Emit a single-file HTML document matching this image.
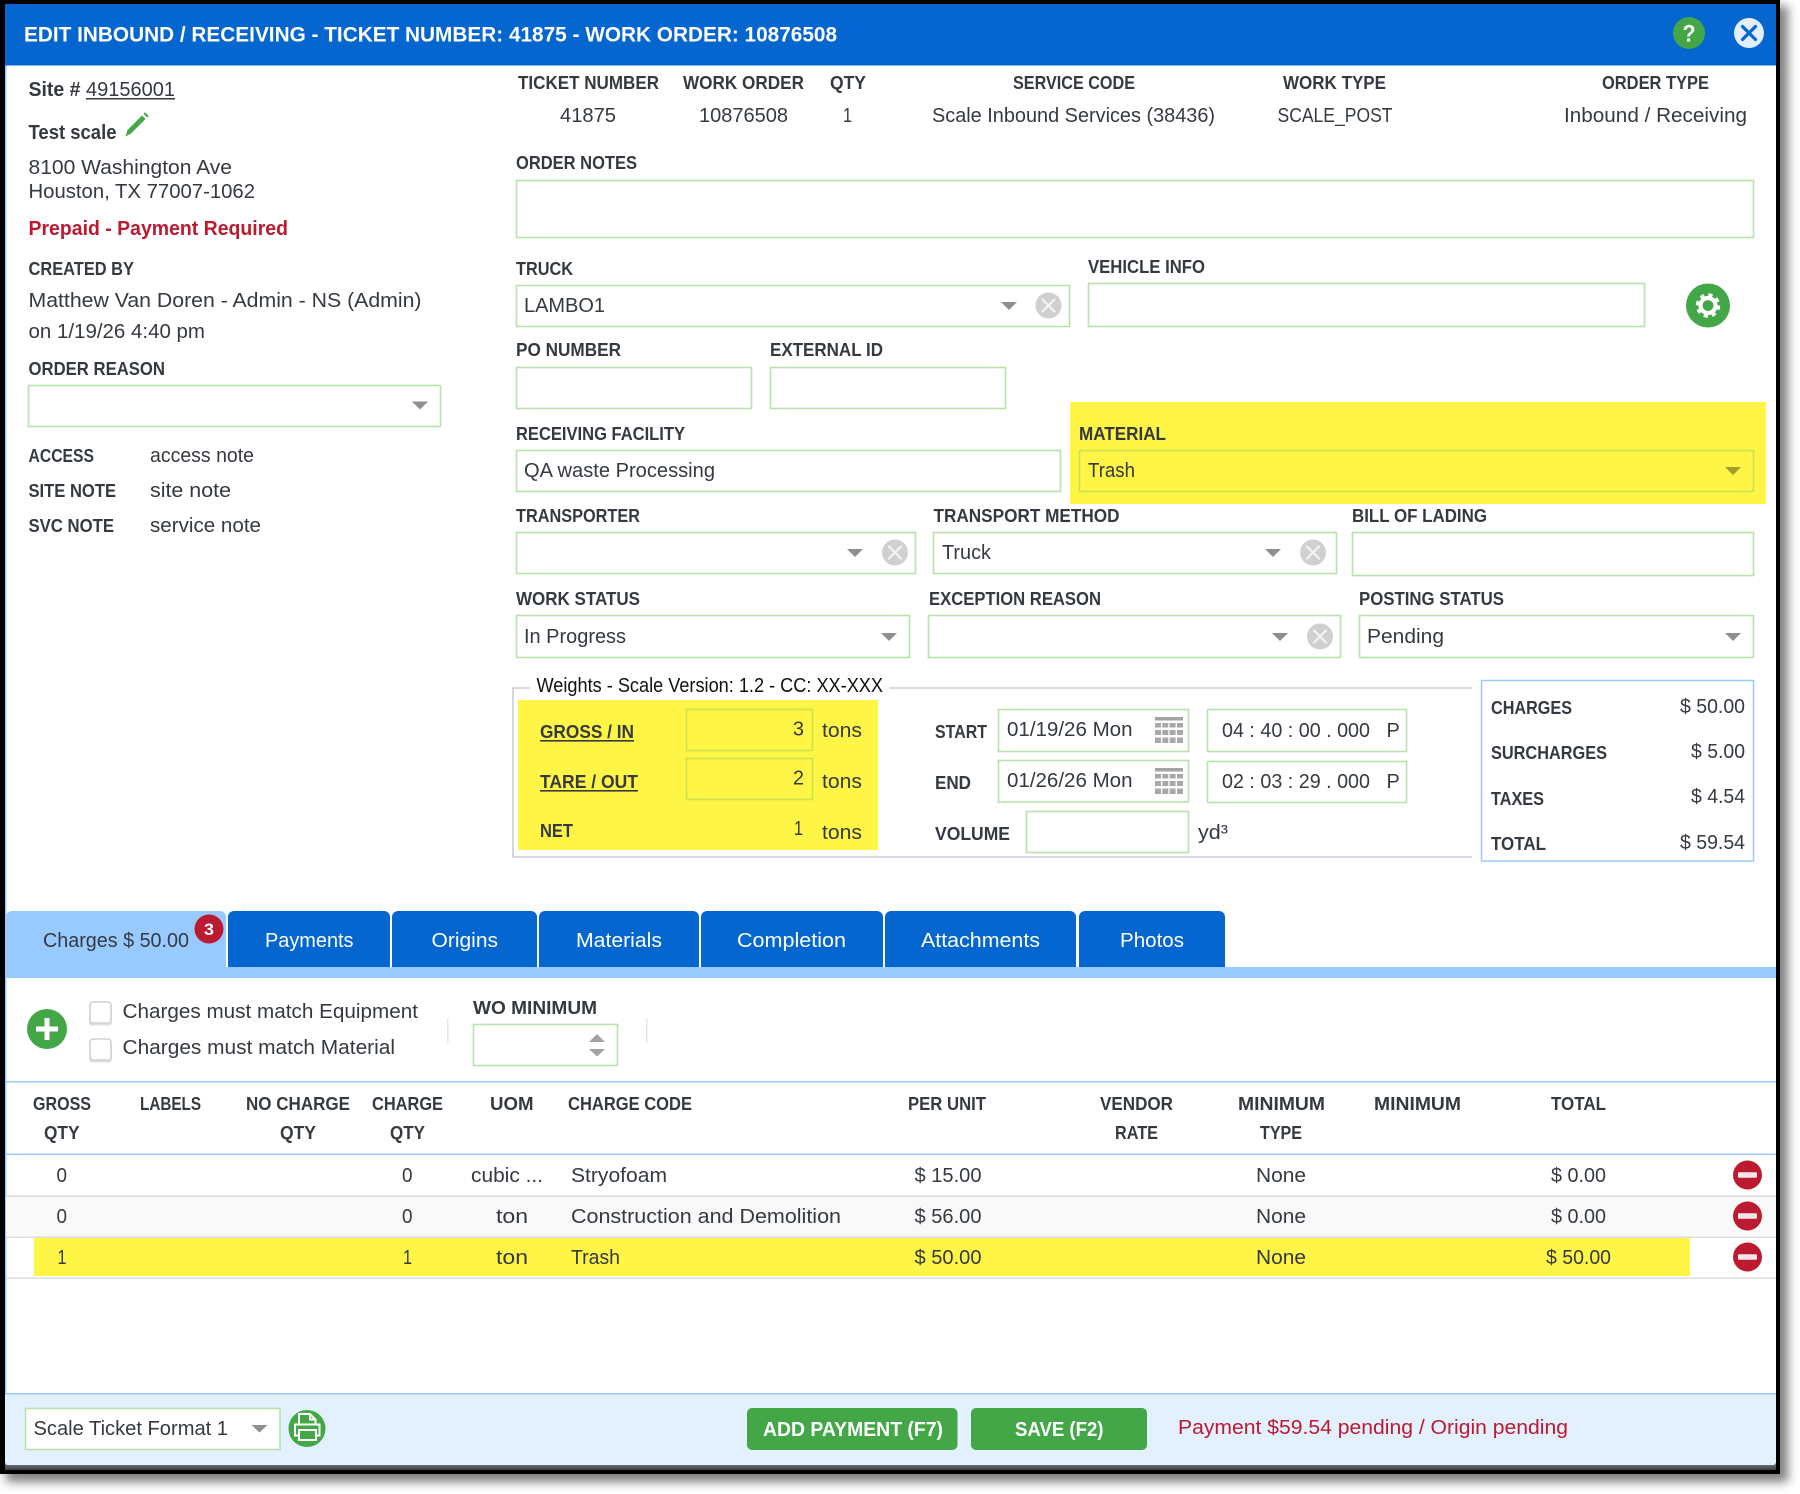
<!DOCTYPE html>
<html lang="en">
<head>
<meta charset="utf-8">
<title>Edit Inbound / Receiving</title>
<style>
html,body{margin:0;padding:0;background:#fff;width:1800px;height:1494px;overflow:hidden}
svg{display:block}
text{font-family:"Liberation Sans",Arial,sans-serif;fill:#343a40;font-size:20px}
.b{font-weight:700;font-size:18px}
.w{fill:#fff}
.red{fill:#bb1a30}
.box{fill:#fff;stroke:#b8e2a9;stroke-width:1.6}
.ybox{fill:none;stroke:#c9e54a;stroke-width:1.6}
</style>
</head>
<body>
<svg width="1800" height="1494" viewBox="0 0 1800 1494" xmlns="http://www.w3.org/2000/svg">
<defs>
<filter id="sh" x="-5%" y="-5%" width="110%" height="110%"><feGaussianBlur stdDeviation="5"/></filter>
<linearGradient id="edge" x1="0" y1="0" x2="0" y2="1"><stop offset="0" stop-color="#9a9ea4"/><stop offset="1" stop-color="#3a3c40"/></linearGradient>
<g id="cal">
<rect x="0" y="0" width="28" height="3.5" fill="#a3a3a3"/>
<g fill="#a8a8a8">
<rect x="0" y="6" width="6" height="4.5"/><rect x="7.3" y="6" width="6" height="4.5"/><rect x="14.6" y="6" width="6" height="4.5"/><rect x="22" y="6" width="6" height="4.5"/>
<rect x="0" y="13" width="6" height="5"/><rect x="7.3" y="13" width="6" height="5"/><rect x="14.6" y="13" width="6" height="5"/><rect x="22" y="13" width="6" height="5"/>
<rect x="0" y="20.5" width="6" height="5.5"/><rect x="7.3" y="20.5" width="6" height="5.5"/><rect x="14.6" y="20.5" width="6" height="5.5"/><rect x="22" y="20.5" width="6" height="5.5"/>
</g>
</g>
<g id="clr">
<circle r="13" fill="#d0d0d0"/>
<path d="M-6-6 6 6M6-6-6 6" stroke="#f4f4f4" stroke-width="2.2" stroke-linecap="round"/>
</g>
<path id="arr" d="M-8-4H8L0 4Z" fill="#8f8f8f"/>
<g id="minus">
<circle r="14.5" fill="#bb1a30"/>
<rect x="-9.5" y="-2.8" width="19" height="5.6" rx="1.2" fill="#f2e6e8"/>
</g>
</defs>

<!-- frame + shadow -->
<rect x="6" y="6" width="1782" height="1476" fill="#808080" filter="url(#sh)"/>
<rect x="0" y="0" width="1780" height="1474" fill="#000"/>
<rect x="5" y="4" width="1771" height="1461" fill="#fff"/>
<rect x="5" y="4" width="1.5" height="1461" fill="#99caff"/>
<rect x="5" y="1460" width="1771" height="10" fill="url(#edge)"/>

<!-- title bar -->
<rect x="5" y="4" width="1771" height="61.500" fill="#0466ce"/>
<text class="b w" style="font-size:21px" x="24" y="41.500" textLength="813" lengthAdjust="spacingAndGlyphs">EDIT INBOUND / RECEIVING - TICKET NUMBER: 41875 - WORK ORDER: 10876508</text>
<circle cx="1689" cy="33" r="16" fill="#43a747"/>
<text class="b w" style="font-size:24px" x="1682.500" y="41.500" textLength="13" lengthAdjust="spacingAndGlyphs">?</text>
<circle cx="1749" cy="33" r="15" fill="#e2eefb"/>
<path d="M1742.500 26.500 1755.500 39.500M1755.500 26.500 1742.500 39.500" stroke="#0466ce" stroke-width="3.200" stroke-linecap="round"/>

<!-- left column -->
<text class="b" style="font-size:20px" x="28.500" y="96" textLength="52" lengthAdjust="spacingAndGlyphs">Site #</text>
<text x="86" y="96" textLength="89" lengthAdjust="spacingAndGlyphs">49156001</text>
<rect x="86" y="98" width="89" height="1.500" fill="#343a40"/>
<text class="b" style="font-size:20px" x="28.500" y="139" textLength="88" lengthAdjust="spacingAndGlyphs">Test scale</text>
<path d="M125.500 136.500 127.500 130 142 115.500 145.500 119 131 133.500Z" fill="#43a747"/>
<path d="M143.500 113.800 145 112.300 148.800 116 147.300 117.500Z" fill="#43a747"/>
<text x="28.500" y="174" textLength="203.500" lengthAdjust="spacingAndGlyphs">8100 Washington Ave</text>
<text x="28.500" y="198" textLength="226.500" lengthAdjust="spacingAndGlyphs">Houston, TX 77007-1062</text>
<text class="b red" style="font-size:20px" x="28.500" y="235" textLength="259.500" lengthAdjust="spacingAndGlyphs">Prepaid - Payment Required</text>
<text class="b" x="28.500" y="275" textLength="105.500" lengthAdjust="spacingAndGlyphs">CREATED BY</text>
<text x="28.500" y="307" textLength="393" lengthAdjust="spacingAndGlyphs">Matthew Van Doren - Admin - NS (Admin)</text>
<text x="28.500" y="338" textLength="176.500" lengthAdjust="spacingAndGlyphs">on 1/19/26 4:40 pm</text>
<text class="b" x="28.500" y="375" textLength="136.500" lengthAdjust="spacingAndGlyphs">ORDER REASON</text>
<rect class="box" x="28.500" y="385.500" width="412" height="41"/>
<use href="#arr" x="420" y="405.500"/>
<text class="b" x="28.500" y="462" textLength="65.500" lengthAdjust="spacingAndGlyphs">ACCESS</text>
<text x="150" y="462" textLength="104" lengthAdjust="spacingAndGlyphs">access note</text>
<text class="b" x="28.500" y="497" textLength="87.500" lengthAdjust="spacingAndGlyphs">SITE NOTE</text>
<text x="150" y="497" textLength="81" lengthAdjust="spacingAndGlyphs">site note</text>
<text class="b" x="28.500" y="532" textLength="85.500" lengthAdjust="spacingAndGlyphs">SVC NOTE</text>
<text x="150" y="532" textLength="111" lengthAdjust="spacingAndGlyphs">service note</text>

<!-- info row -->
<text class="b" x="518" y="89" textLength="141" lengthAdjust="spacingAndGlyphs">TICKET NUMBER</text>
<text class="b" x="683" y="89" textLength="121" lengthAdjust="spacingAndGlyphs">WORK ORDER</text>
<text class="b" x="830" y="89" textLength="36" lengthAdjust="spacingAndGlyphs">QTY</text>
<text class="b" x="1013" y="89" textLength="122" lengthAdjust="spacingAndGlyphs">SERVICE CODE</text>
<text class="b" x="1283" y="89" textLength="103" lengthAdjust="spacingAndGlyphs">WORK TYPE</text>
<text class="b" x="1602" y="89" textLength="107" lengthAdjust="spacingAndGlyphs">ORDER TYPE</text>
<text x="560" y="122" textLength="56" lengthAdjust="spacingAndGlyphs">41875</text>
<text x="699" y="122" textLength="89" lengthAdjust="spacingAndGlyphs">10876508</text>
<text x="843" y="122" textLength="9" lengthAdjust="spacingAndGlyphs">1</text>
<text x="932" y="122" textLength="283" lengthAdjust="spacingAndGlyphs">Scale Inbound Services (38436)</text>
<text x="1277.500" y="122" textLength="115" lengthAdjust="spacingAndGlyphs">SCALE_POST</text>
<text x="1564" y="122" textLength="183" lengthAdjust="spacingAndGlyphs">Inbound / Receiving</text>

<text class="b" x="516" y="169" textLength="121" lengthAdjust="spacingAndGlyphs">ORDER NOTES</text>
<rect class="box" x="516.500" y="180.500" width="1237" height="57"/>

<text class="b" x="516" y="275" textLength="57" lengthAdjust="spacingAndGlyphs">TRUCK</text>
<text class="b" x="1088" y="273" textLength="117" lengthAdjust="spacingAndGlyphs">VEHICLE INFO</text>
<rect class="box" x="516.500" y="285.500" width="553" height="41"/>
<text x="524" y="312" textLength="81" lengthAdjust="spacingAndGlyphs">LAMBO1</text>
<use href="#arr" x="1009" y="306"/>
<use href="#clr" x="1048.500" y="305.500"/>
<rect class="box" x="1088.500" y="283.500" width="556" height="43"/>
<circle cx="1708" cy="305.500" r="22" fill="#43a747"/>
<circle cx="1708" cy="305.500" r="7.500" fill="none" stroke="#fff" stroke-width="4.200"/>
<circle cx="1708" cy="305.500" r="10.500" fill="none" stroke="#fff" stroke-width="3.500" stroke-dasharray="4.200 4.047"/>

<text class="b" x="516" y="356" textLength="105" lengthAdjust="spacingAndGlyphs">PO NUMBER</text>
<text class="b" x="770" y="356" textLength="113" lengthAdjust="spacingAndGlyphs">EXTERNAL ID</text>
<rect class="box" x="516.500" y="367.500" width="235" height="41"/>
<rect class="box" x="770.500" y="367.500" width="235" height="41"/>

<text class="b" x="516" y="440" textLength="169" lengthAdjust="spacingAndGlyphs">RECEIVING FACILITY</text>
<rect class="box" x="516.500" y="450.500" width="544" height="41"/>
<text x="524" y="477" textLength="191" lengthAdjust="spacingAndGlyphs">QA waste Processing</text>

<rect x="1070" y="402" width="696" height="102" fill="#fff547"/>
<text class="b" x="1079" y="440" textLength="87" lengthAdjust="spacingAndGlyphs">MATERIAL</text>
<rect class="ybox" x="1079.500" y="450.500" width="674" height="41"/>
<text x="1088" y="477" textLength="47" lengthAdjust="spacingAndGlyphs">Trash</text>
<path d="M1725 467H1741L1733 475Z" fill="#a39c2e"/>

<text class="b" x="516" y="522" textLength="124" lengthAdjust="spacingAndGlyphs">TRANSPORTER</text>
<text class="b" x="933.500" y="522" textLength="186" lengthAdjust="spacingAndGlyphs">TRANSPORT METHOD</text>
<text class="b" x="1352" y="522" textLength="135" lengthAdjust="spacingAndGlyphs">BILL OF LADING</text>
<rect class="box" x="516.500" y="532.500" width="399" height="41"/>
<use href="#arr" x="855" y="553"/>
<use href="#clr" x="895" y="552.500"/>
<rect class="box" x="933.500" y="532.500" width="403" height="41"/>
<text x="942" y="559" textLength="49" lengthAdjust="spacingAndGlyphs">Truck</text>
<use href="#arr" x="1273" y="553"/>
<use href="#clr" x="1313" y="552.500"/>
<rect class="box" x="1352.500" y="532.500" width="401" height="43"/>

<text class="b" x="516" y="605" textLength="124" lengthAdjust="spacingAndGlyphs">WORK STATUS</text>
<text class="b" x="929" y="605" textLength="172" lengthAdjust="spacingAndGlyphs">EXCEPTION REASON</text>
<text class="b" x="1359" y="605" textLength="145" lengthAdjust="spacingAndGlyphs">POSTING STATUS</text>
<rect class="box" x="516.500" y="615.500" width="393" height="42"/>
<text x="524" y="643" textLength="102" lengthAdjust="spacingAndGlyphs">In Progress</text>
<use href="#arr" x="889" y="637"/>
<rect class="box" x="928.500" y="615.500" width="412" height="42"/>
<use href="#arr" x="1280" y="637"/>
<use href="#clr" x="1320" y="636.500"/>
<rect class="box" x="1359.500" y="615.500" width="394" height="42"/>
<text x="1367" y="643" textLength="77" lengthAdjust="spacingAndGlyphs">Pending</text>
<use href="#arr" x="1733" y="637"/>

<!-- weights -->
<path d="M530 688H513V857H1472M889 688H1472" fill="none" stroke="#c0c0ce" stroke-width="1.300"/>
<text style="fill:#111" x="536.500" y="692" textLength="346.500" lengthAdjust="spacingAndGlyphs">Weights - Scale Version: 1.2 - CC: XX-XXX</text>
<rect x="518" y="700" width="360" height="150" fill="#fff547"/>
<text class="b" x="540" y="738" textLength="94" lengthAdjust="spacingAndGlyphs">GROSS / IN</text>
<rect x="540" y="740" width="94" height="1.600" fill="#343a40"/>
<rect class="ybox" x="686.500" y="709.500" width="126" height="41"/>
<text x="793" y="735.500" textLength="11" lengthAdjust="spacingAndGlyphs">3</text>
<text x="822" y="737" textLength="40" lengthAdjust="spacingAndGlyphs">tons</text>
<text class="b" x="540" y="788" textLength="98" lengthAdjust="spacingAndGlyphs">TARE / OUT</text>
<rect x="540" y="790" width="98" height="1.600" fill="#343a40"/>
<rect class="ybox" x="686.500" y="758.500" width="126" height="41"/>
<text x="793" y="784.500" textLength="11" lengthAdjust="spacingAndGlyphs">2</text>
<text x="822" y="788" textLength="40" lengthAdjust="spacingAndGlyphs">tons</text>
<text class="b" x="540" y="837" textLength="33" lengthAdjust="spacingAndGlyphs">NET</text>
<text x="794" y="835" textLength="9" lengthAdjust="spacingAndGlyphs">1</text>
<text x="822" y="839" textLength="40" lengthAdjust="spacingAndGlyphs">tons</text>

<text class="b" x="935" y="738" textLength="52" lengthAdjust="spacingAndGlyphs">START</text>
<rect class="box" x="998.500" y="709.500" width="190" height="42"/>
<text x="1007" y="736" textLength="125.500" lengthAdjust="spacingAndGlyphs">01/19/26 Mon</text>
<use href="#cal" x="1155" y="717"/>
<rect class="box" x="1207.500" y="709.500" width="199" height="42"/>
<text x="1222" y="737" textLength="148" lengthAdjust="spacingAndGlyphs">04 : 40 : 00 . 000</text>
<text x="1386.500" y="737" textLength="13.300" lengthAdjust="spacingAndGlyphs">P</text>

<text class="b" x="935" y="789" textLength="36" lengthAdjust="spacingAndGlyphs">END</text>
<rect class="box" x="998.500" y="760.500" width="190" height="41.500"/>
<text x="1007" y="787" textLength="125.500" lengthAdjust="spacingAndGlyphs">01/26/26 Mon</text>
<use href="#cal" x="1155" y="768"/>
<rect class="box" x="1207.500" y="761.500" width="199" height="41"/>
<text x="1222" y="788" textLength="148" lengthAdjust="spacingAndGlyphs">02 : 03 : 29 . 000</text>
<text x="1386.500" y="788" textLength="13.300" lengthAdjust="spacingAndGlyphs">P</text>

<text class="b" x="935" y="840" textLength="75" lengthAdjust="spacingAndGlyphs">VOLUME</text>
<rect class="box" x="1026.500" y="811.500" width="162" height="41"/>
<text x="1198" y="839" textLength="30" lengthAdjust="spacingAndGlyphs">yd³</text>

<!-- charges box -->
<rect x="1481.500" y="680.500" width="272" height="180.500" fill="#fff" stroke="#99caff" stroke-width="1.500"/>
<text class="b" x="1491" y="714" textLength="81" lengthAdjust="spacingAndGlyphs">CHARGES</text>
<text x="1680" y="713" textLength="65" lengthAdjust="spacingAndGlyphs">$ 50.00</text>
<text class="b" x="1491" y="759" textLength="116" lengthAdjust="spacingAndGlyphs">SURCHARGES</text>
<text x="1691" y="758" textLength="54" lengthAdjust="spacingAndGlyphs">$ 5.00</text>
<text class="b" x="1491" y="805" textLength="53" lengthAdjust="spacingAndGlyphs">TAXES</text>
<text x="1691" y="803" textLength="54" lengthAdjust="spacingAndGlyphs">$ 4.54</text>
<text class="b" x="1491" y="850" textLength="55" lengthAdjust="spacingAndGlyphs">TOTAL</text>
<text x="1680" y="849" textLength="65" lengthAdjust="spacingAndGlyphs">$ 59.54</text>

<!-- tabs -->
<rect x="6" y="967" width="1770" height="11" fill="#99caff"/>
<path d="M6 967V917a6 6 0 0 1 6-6H220a6 6 0 0 1 6 6V967Z" fill="#99caff"/>
<path d="M228 967V917a6 6 0 0 1 6-6H384a6 6 0 0 1 6 6V967Z" fill="#0466ce"/>
<path d="M392 967V917a6 6 0 0 1 6-6H531a6 6 0 0 1 6 6V967Z" fill="#0466ce"/>
<path d="M539 967V917a6 6 0 0 1 6-6H693a6 6 0 0 1 6 6V967Z" fill="#0466ce"/>
<path d="M701 967V917a6 6 0 0 1 6-6H877a6 6 0 0 1 6 6V967Z" fill="#0466ce"/>
<path d="M885 967V917a6 6 0 0 1 6-6H1070a6 6 0 0 1 6 6V967Z" fill="#0466ce"/>
<path d="M1079 967V917a6 6 0 0 1 6-6H1219a6 6 0 0 1 6 6V967Z" fill="#0466ce"/>
<text x="43" y="947" textLength="146" lengthAdjust="spacingAndGlyphs">Charges $ 50.00</text>
<circle cx="209" cy="929" r="14.500" fill="#bb1a30"/>
<text class="w b" style="font-size:17px" x="204" y="935" textLength="10" lengthAdjust="spacingAndGlyphs">3</text>
<text class="w" x="265" y="947" textLength="88.500" lengthAdjust="spacingAndGlyphs">Payments</text>
<text class="w" x="431.500" y="947" textLength="66.500" lengthAdjust="spacingAndGlyphs">Origins</text>
<text class="w" x="576" y="947" textLength="86" lengthAdjust="spacingAndGlyphs">Materials</text>
<text class="w" x="737" y="947" textLength="109" lengthAdjust="spacingAndGlyphs">Completion</text>
<text class="w" x="921" y="947" textLength="119" lengthAdjust="spacingAndGlyphs">Attachments</text>
<text class="w" x="1120" y="947" textLength="64" lengthAdjust="spacingAndGlyphs">Photos</text>

<!-- charges toolbar -->
<circle cx="47" cy="1029" r="20" fill="#43a747"/>
<path d="M47 1018V1040M36 1029H58" stroke="#fff" stroke-width="5"/>
<rect x="89" y="1002" width="23" height="22" rx="3" fill="#000" opacity=".12" transform="translate(0 1.500)"/>
<rect x="89" y="1039" width="23" height="22" rx="3" fill="#000" opacity=".12" transform="translate(0 1.500)"/>
<rect x="90" y="1002" width="21" height="21" rx="3" fill="#fff" stroke="#d0d0d0" stroke-width="1.500"/>
<rect x="90" y="1039" width="21" height="21" rx="3" fill="#fff" stroke="#d0d0d0" stroke-width="1.500"/>
<text x="122.500" y="1018" textLength="295.500" lengthAdjust="spacingAndGlyphs">Charges must match Equipment</text>
<text x="122.500" y="1054" textLength="272.500" lengthAdjust="spacingAndGlyphs">Charges must match Material</text>
<rect x="447" y="1018" width="1.500" height="25" fill="#e6e6e6"/>
<rect x="646" y="1018" width="1.500" height="25" fill="#e6e6e6"/>
<text class="b" x="473" y="1014" textLength="124" lengthAdjust="spacingAndGlyphs">WO MINIMUM</text>
<rect class="box" x="473.500" y="1024.500" width="144" height="41"/>
<path d="M589 1042H605L597 1034Z" fill="#a2a2a2"/>
<path d="M589 1049H605L597 1056.500Z" fill="#a2a2a2"/>

<rect x="6" y="1081" width="1770" height="1.500" fill="#99caff"/>

<!-- table header -->
<text class="b" x="33" y="1110" textLength="58" lengthAdjust="spacingAndGlyphs">GROSS</text>
<text class="b" x="44" y="1139" textLength="35.500" lengthAdjust="spacingAndGlyphs">QTY</text>
<text class="b" x="140" y="1110" textLength="61" lengthAdjust="spacingAndGlyphs">LABELS</text>
<text class="b" x="246" y="1110" textLength="104" lengthAdjust="spacingAndGlyphs">NO CHARGE</text>
<text class="b" x="280" y="1139" textLength="36" lengthAdjust="spacingAndGlyphs">QTY</text>
<text class="b" x="372" y="1110" textLength="71" lengthAdjust="spacingAndGlyphs">CHARGE</text>
<text class="b" x="390" y="1139" textLength="35" lengthAdjust="spacingAndGlyphs">QTY</text>
<text class="b" x="490" y="1110" textLength="43.500" lengthAdjust="spacingAndGlyphs">UOM</text>
<text class="b" x="568" y="1110" textLength="124" lengthAdjust="spacingAndGlyphs">CHARGE CODE</text>
<text class="b" x="908" y="1110" textLength="78" lengthAdjust="spacingAndGlyphs">PER UNIT</text>
<text class="b" x="1100" y="1110" textLength="73" lengthAdjust="spacingAndGlyphs">VENDOR</text>
<text class="b" x="1115" y="1139" textLength="43" lengthAdjust="spacingAndGlyphs">RATE</text>
<text class="b" x="1238" y="1110" textLength="87" lengthAdjust="spacingAndGlyphs">MINIMUM</text>
<text class="b" x="1260" y="1139" textLength="42" lengthAdjust="spacingAndGlyphs">TYPE</text>
<text class="b" x="1374" y="1110" textLength="87" lengthAdjust="spacingAndGlyphs">MINIMUM</text>
<text class="b" x="1551" y="1110" textLength="55" lengthAdjust="spacingAndGlyphs">TOTAL</text>
<rect x="6" y="1153.500" width="1770" height="1.500" fill="#99caff"/>

<!-- rows -->
<rect x="6" y="1196" width="1770" height="41" fill="#f9f9f9"/>
<rect x="34" y="1238" width="1656" height="38" fill="#fff547"/>
<rect x="6" y="1195.500" width="1770" height="1.500" fill="#ddd"/>
<rect x="6" y="1236.500" width="1770" height="1.500" fill="#ddd"/>
<rect x="6" y="1277.500" width="1770" height="1.500" fill="#ddd"/>

<text x="56.500" y="1182" textLength="10.500" lengthAdjust="spacingAndGlyphs">0</text>
<text x="402" y="1182" textLength="10.500" lengthAdjust="spacingAndGlyphs">0</text>
<text x="471" y="1182" textLength="72" lengthAdjust="spacingAndGlyphs">cubic ...</text>
<text x="571" y="1182" textLength="96" lengthAdjust="spacingAndGlyphs">Stryofoam</text>
<text x="914.500" y="1182" textLength="67" lengthAdjust="spacingAndGlyphs">$ 15.00</text>
<text x="1256" y="1182" textLength="50" lengthAdjust="spacingAndGlyphs">None</text>
<text x="1551" y="1182" textLength="55" lengthAdjust="spacingAndGlyphs">$ 0.00</text>
<use href="#minus" x="1747.500" y="1175"/>

<text x="56.500" y="1223" textLength="10.500" lengthAdjust="spacingAndGlyphs">0</text>
<text x="402" y="1223" textLength="10.500" lengthAdjust="spacingAndGlyphs">0</text>
<text x="496" y="1223" textLength="32" lengthAdjust="spacingAndGlyphs">ton</text>
<text x="571" y="1223" textLength="270" lengthAdjust="spacingAndGlyphs">Construction and Demolition</text>
<text x="914.500" y="1223" textLength="67" lengthAdjust="spacingAndGlyphs">$ 56.00</text>
<text x="1256" y="1223" textLength="50" lengthAdjust="spacingAndGlyphs">None</text>
<text x="1551" y="1223" textLength="55" lengthAdjust="spacingAndGlyphs">$ 0.00</text>
<use href="#minus" x="1747.500" y="1216"/>

<text x="57.500" y="1264" textLength="9" lengthAdjust="spacingAndGlyphs">1</text>
<text x="403" y="1264" textLength="9" lengthAdjust="spacingAndGlyphs">1</text>
<text x="496" y="1264" textLength="32" lengthAdjust="spacingAndGlyphs">ton</text>
<text x="571" y="1264" textLength="49" lengthAdjust="spacingAndGlyphs">Trash</text>
<text x="914.500" y="1264" textLength="67" lengthAdjust="spacingAndGlyphs">$ 50.00</text>
<text x="1256" y="1264" textLength="50" lengthAdjust="spacingAndGlyphs">None</text>
<text x="1546" y="1264" textLength="65" lengthAdjust="spacingAndGlyphs">$ 50.00</text>
<use href="#minus" x="1747.500" y="1257"/>

<!-- footer -->
<rect x="5" y="1393" width="1771" height="72" rx="3" fill="#e3f0fd"/>
<rect x="5" y="1393" width="1771" height="1.500" fill="#99caff"/>
<rect class="box" x="25.500" y="1408.500" width="254.500" height="41"/>
<text x="33.500" y="1435" textLength="194.500" lengthAdjust="spacingAndGlyphs">Scale Ticket Format 1</text>
<path d="M251.500 1425H267.500L259.500 1432.500Z" fill="#8f8f8f"/>
<circle cx="307" cy="1428.500" r="18.500" fill="#43a747"/>
<path d="M299 1423.500V1414H310L315.500 1419.500V1423.500M310 1414V1419.500H315.500" fill="none" stroke="#fff" stroke-width="2"/>
<path d="M298 1435.500H295V1424.500H319.500V1435.500H316.500" fill="none" stroke="#fff" stroke-width="2"/>
<rect x="299" y="1430" width="17" height="10" fill="none" stroke="#fff" stroke-width="2"/>
<rect x="747" y="1408" width="210.500" height="42" rx="5" fill="#43a747"/>
<rect x="971" y="1408" width="176" height="42" rx="5" fill="#43a747"/>
<text class="b w" style="font-size:20px" x="763" y="1436" textLength="180" lengthAdjust="spacingAndGlyphs">ADD PAYMENT (F7)</text>
<text class="b w" style="font-size:20px" x="1015" y="1436" textLength="88.500" lengthAdjust="spacingAndGlyphs">SAVE (F2)</text>
<text class="red" x="1178" y="1434" textLength="390" lengthAdjust="spacingAndGlyphs">Payment $59.54 pending / Origin pending</text>
</svg>
</body>
</html>
